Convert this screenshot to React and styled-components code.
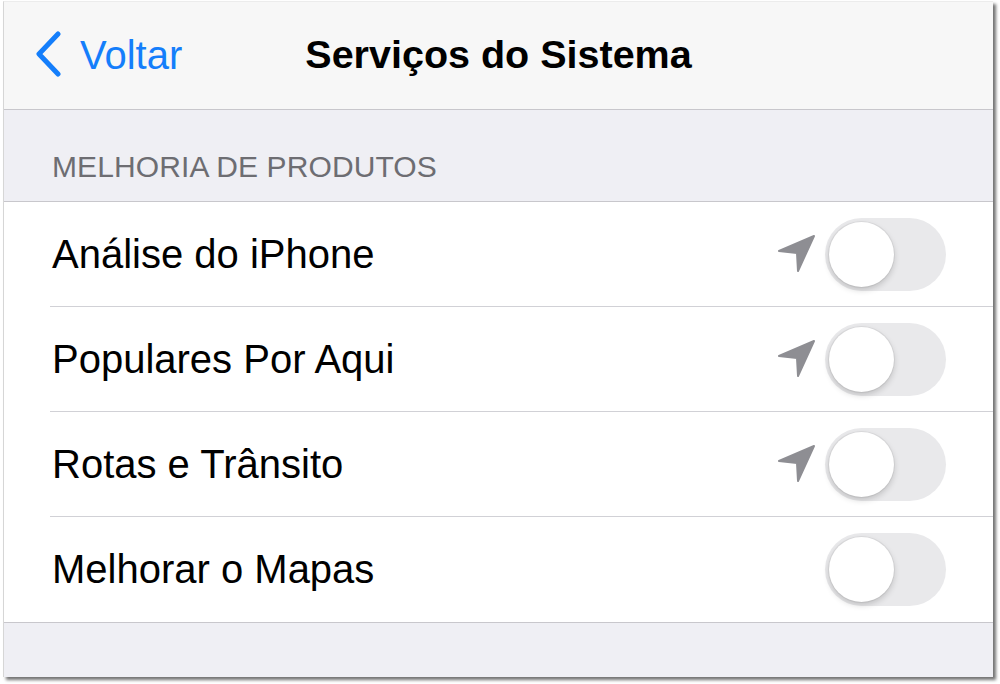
import React from 'react'
import styled, { createGlobalStyle } from 'styled-components'

const GlobalStyle = createGlobalStyle`
  html, body {
    margin: 0;
    padding: 0;
    background: #ffffff;
  }
  * { box-sizing: border-box; }
`

const rows = [
  { label: 'Análise do iPhone', location: true },
  { label: 'Populares Por Aqui', location: true },
  { label: 'Rotas e Trânsito', location: true },
  { label: 'Melhorar o Mapas', location: false },
]

function LocationArrow() {
  return (
    <svg width="40" height="40" viewBox="0 0 40 40">
      <path
        d="M2 17 L37 2 L21 37 L20 19 Z"
        fill="#8e8e93"
        stroke="#8e8e93"
        strokeWidth="2"
        strokeLinejoin="round"
      />
    </svg>
  )
}

function Chevron() {
  return (
    <svg width="30" height="48" viewBox="0 0 30 48">
      <polyline
        points="24,3 5,23 24,43"
        fill="none"
        stroke="#147efb"
        strokeWidth="5"
        strokeLinecap="round"
        strokeLinejoin="round"
      />
    </svg>
  )
}

function App() {
  return (
    <Page>
      <GlobalStyle />
      <Screen>
        <NavBar>
          <BackButton>
            <Chevron />
            <BackLabel>Voltar</BackLabel>
          </BackButton>
          <Title>Serviços do Sistema</Title>
          <span />
        </NavBar>
        <SectionHeader>MELHORIA DE PRODUTOS</SectionHeader>
        <Group>
          {rows.map((row, i) => (
            <Row key={row.label} last={i === rows.length - 1}>
              <RowLabel>{row.label}</RowLabel>
              <Accessory>
                {row.location && <LocationArrow />}
                <Toggle>
                  <Knob />
                </Toggle>
              </Accessory>
            </Row>
          ))}
        </Group>
        <Footer />
      </Screen>
    </Page>
  )
}

export default App

const Page = styled.div`
width:1000px;
height:684px;
background:#ffffff;
padding:1px 0 0 3px;
font-family:"Liberation Sans", Arial, sans-serif;
`
const Screen = styled.div`
width:990px;
height:676px;
display:flex;
flex-direction:column;
background:#efeff4;
border-left:1px solid #d6d6d6;
border-top:1px solid #ececec;
box-shadow:3px 3px 3px rgba(0,0,0,0.55);
overflow:hidden;
`
const NavBar = styled.div`
height:108px;
flex-shrink:0;
display:grid;
grid-template-columns:1fr auto 1fr;
align-items:center;
background:#f7f7f7;
border-bottom:1px solid #c8c7cc;
padding:0 30px 2px 30px;
`
const BackButton = styled.div`
display:flex;
align-items:center;
gap:16px;
color:#147efb;
`
const BackLabel = styled.span`
font-size:40px;
line-height:1;
`
const Title = styled.div`
font-size:39.5px;
font-weight:700;
color:#000000;
letter-spacing:0px;
`
const SectionHeader = styled.div`
height:92px;
flex-shrink:0;
padding:40px 0 0 48px;
font-size:30px;
line-height:34px;
color:#6d6d72;
letter-spacing:0.1px;
border-bottom:1px solid #c8c7cc;
`
const Group = styled.div`
background:#ffffff;
border-bottom:1px solid #c8c7cc;
`
const Row = styled.div`
height:105px;
margin-left:46px;
padding:0 47px 0 2px;
display:flex;
align-items:center;
justify-content:space-between;
border-bottom:${p => (p.last ? 'none' : '1px solid #d1d1d6')};
`
const RowLabel = styled.span`
font-size:40px;
color:#000000;
`
const Accessory = styled.div`
display:flex;
align-items:center;
gap:8px;
`
const Toggle = styled.div`
width:121px;
height:73px;
border-radius:37px;
background:#e9e9eb;
padding:4px;
display:flex;
align-items:center;
`
const Knob = styled.div`
width:65px;
height:65px;
border-radius:50%;
background:#ffffff;
box-shadow:0 3px 6px rgba(0,0,0,0.18), 0 0 0 1px rgba(0,0,0,0.05);
`
const Footer = styled.div`
flex:1;
`
